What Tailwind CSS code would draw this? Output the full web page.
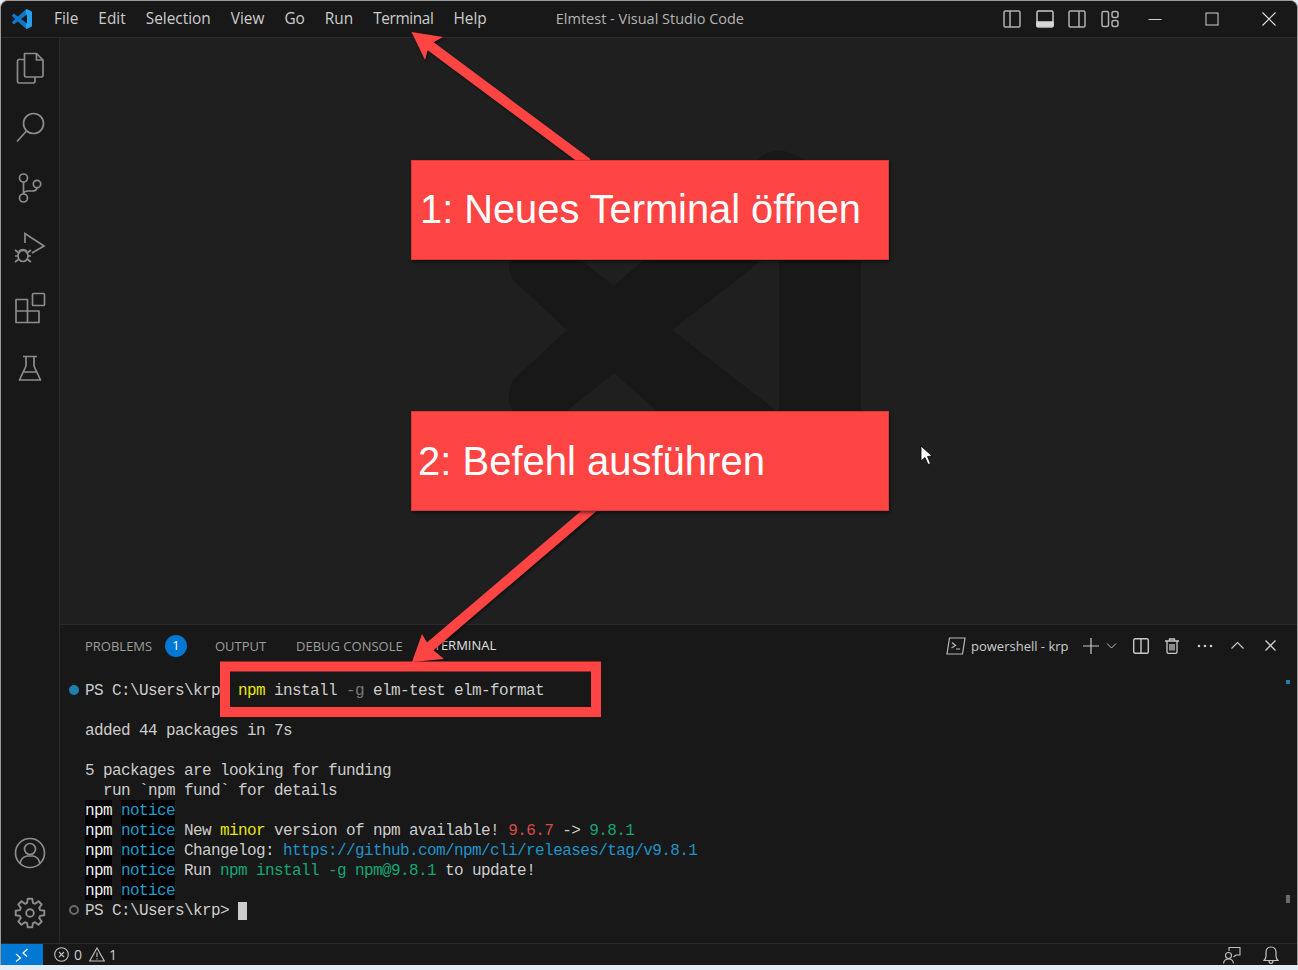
<!DOCTYPE html>
<html lang="en">
<head>
    <meta charset="utf-8"/>
    <meta content="width=device-width, initial-scale=1.0" name="viewport"/>
    <title>Elmtest - Visual Studio Code</title>
    <script src="https://cdn.jsdelivr.net/npm/@tailwindcss/browser@4"></script>
</head>
<body class="bg-[#e4edf6]">
<div class="relative w-[1298px] h-[970px] overflow-hidden">

    <!-- Window -->
    <div class="h-[965px] flex flex-col overflow-hidden rounded-t-lg border-x border-t border-[#9a9a9a] bg-[#1f1f1f] font-['Open_Sans',sans-serif] text-[#cccccc]">

        <!-- Title bar -->
        <div class="h-[37px] shrink-0 flex items-center bg-[#181818] border-b border-[#2b2b2b]">
            <svg class="ml-[11px] w-5 h-5" viewBox="0 0 24 24">
                <defs><linearGradient id="logo"><stop offset="0.72" stop-color="#0e78c8"/><stop offset="0.72" stop-color="#25a0ee"/></linearGradient></defs>
                <path fill="url(#logo)" d="M23.15 2.587L18.21.21a1.494 1.494 0 0 0-1.705.29l-9.46 8.63-4.12-3.128a.999.999 0 0 0-1.276.057L.327 7.261A1 1 0 0 0 .326 8.74L3.899 12 .326 15.26a1 1 0 0 0 .001 1.479L1.65 17.94a.999.999 0 0 0 1.276.057l4.12-3.128 9.46 8.63a1.492 1.492 0 0 0 1.704.29l4.942-2.377A1.5 1.5 0 0 0 24 20.06V3.939a1.5 1.5 0 0 0-.85-1.352zm-5.146 14.861L10.826 12l7.178-5.448v10.896z"/>
            </svg>
            <div class="ml-[22px] flex gap-5 text-[15.4px] leading-none">
                <span>File</span><span>Edit</span><span>Selection</span><span>View</span><span>Go</span><span>Run</span><span class="tracking-[-0.4px]">Terminal</span><span>Help</span>
            </div>
            <span class="ml-[69px] text-[14.5px] leading-none text-[#b4b4b4]">Elmtest - Visual Studio Code</span>
            <div class="ml-auto flex items-center">
                <span class="w-[32.5px] flex justify-center"><svg class="w-[18px] h-[18px]" viewBox="0 0 18 18" fill="none" stroke="#b0b0b0" stroke-width="1.5"><rect x="1" y="1" width="16" height="16" rx="1.5"/><path d="M7 1V17"/></svg></span>
                <span class="w-[32.5px] flex justify-center"><svg class="w-[18px] h-[18px]" viewBox="0 0 18 18" fill="none" stroke="#c8c8c8" stroke-width="1.5"><rect x="1" y="1" width="16" height="16" rx="1.5"/><path d="M1 12H17V16H1Z" fill="#d8d8d8" stroke="#d8d8d8"/></svg></span>
                <span class="w-[32.5px] flex justify-center"><svg class="w-[18px] h-[18px]" viewBox="0 0 18 18" fill="none" stroke="#b0b0b0" stroke-width="1.5"><rect x="1" y="1" width="16" height="16" rx="1.5"/><path d="M11 1V17"/></svg></span>
                <span class="w-[32.5px] flex justify-center"><svg class="w-[18px] h-[18px]" viewBox="0 0 18 18" fill="none" stroke="#b0b0b0" stroke-width="1.5"><rect x="1" y="1.5" width="6.5" height="15" rx="1.5"/><rect x="11" y="1.5" width="6" height="6" rx="2"/><rect x="11" y="10.5" width="6" height="6" rx="2"/></svg></span>
                <span class="w-[57px] flex justify-center"><svg class="w-[14px] h-[14px]" viewBox="0 0 14 14" fill="none" stroke="#d0d0d0"><path d="M0.5 7.5H13.5"/></svg></span>
                <span class="w-[57px] flex justify-center"><svg class="w-[14px] h-[14px]" viewBox="0 0 14 14" fill="none" stroke="#d0d0d0"><rect x="1" y="1" width="12" height="12"/></svg></span>
                <span class="w-[57px] flex justify-center"><svg class="w-[14px] h-[14px]" viewBox="0 0 14 14" fill="none" stroke="#e0e0e0" stroke-width="1.1"><path d="M0.5 0.5L13.5 13.5M13.5 0.5L0.5 13.5"/></svg></span>
            </div>
        </div>

        <div class="flex-1 flex min-h-0">
            <!-- Activity bar -->
            <div class="w-[59px] shrink-0 flex flex-col items-center bg-[#181818] border-r border-[#2b2b2b]">
                <div class="pt-[10px] flex flex-col gap-5">
                    <svg class="w-10 h-10" viewBox="10 48 40 40" fill="none" stroke="#8c8c8c" stroke-width="1.7" stroke-linejoin="round"><path d="M24.5 53.5H36.5L43 60V75.5Q43 77 41.5 77H26Q24.5 77 24.5 75.5Z"/><path d="M36.5 53.5V60H43"/><path d="M24.5 59.5H19Q17.5 59.5 17.5 61V81.5Q17.5 83 19 83H33.5Q35 83 35 81.5V77"/></svg>
                    <svg class="w-10 h-10" viewBox="10 108 40 40" fill="none" stroke="#8c8c8c" stroke-width="1.7"><circle cx="33.5" cy="123.5" r="10"/><path d="M26.5 131L17 141.5"/></svg>
                    <svg class="w-10 h-10" viewBox="10 168 40 40" fill="none" stroke="#8c8c8c" stroke-width="1.7"><circle cx="23.5" cy="178" r="4"/><circle cx="23.5" cy="198" r="4"/><circle cx="37" cy="184" r="3.7"/><path d="M23.5 182V194M37 188Q36.5 191 32 191H28Q24 191 23.5 194"/></svg>
                    <svg class="w-10 h-10" viewBox="10 228 40 40" fill="none" stroke="#8c8c8c" stroke-width="1.7"><path d="M25 243V233.5L44 246L32 253"/><ellipse cx="23" cy="256" rx="5" ry="5.5"/><path d="M19 251Q23 248 27 251M15 250L19 253M31 250L27 253M15 256H18M28 256H31M15 262L19 259M31 262L27 259"/></svg>
                    <svg class="w-10 h-10" viewBox="10 288 40 40" fill="none" stroke="#8c8c8c" stroke-width="1.7" stroke-linejoin="round"><path d="M16 299.5H27.5V322.5H16ZM16 311H39V322.5H27.5"/><rect x="32.5" y="293.5" width="12" height="12" rx="1"/></svg>
                    <svg class="w-10 h-10" viewBox="10 348 40 40" fill="none" stroke="#8c8c8c" stroke-width="1.7" stroke-linejoin="round"><path d="M23 356.5H37M26 356.5V366L19.5 380H40.5L34 366V356.5M23.5 372H36.5"/></svg>
                </div>
                <div class="mt-auto pb-[10px] flex flex-col gap-5">
                    <svg class="w-10 h-10" viewBox="10 833 40 40" fill="none" stroke="#8c8c8c" stroke-width="1.7"><circle cx="30" cy="853" r="14.5"/><circle cx="30" cy="849" r="5.5"/><path d="M20 864Q21 857 27 856H33Q39 857 40 864"/></svg>
                    <svg class="w-10 h-10" viewBox="-20 -20 40 40" fill="none" stroke="#8c8c8c" stroke-width="1.9" stroke-linejoin="round"><path d="M-2.9 -10.1L-2.3 -14.3H2.3L2.9 -10.1L5.09 -9.19L8.49 -11.74L11.74 -8.49L9.19 -5.09L10.1 -2.9L14.3 -2.3V2.3L10.1 2.9L9.19 5.09L11.74 8.49L8.49 11.74L5.09 9.19L2.9 10.1L2.3 14.3H-2.3L-2.9 10.1L-5.09 9.19L-8.49 11.74L-11.74 8.49L-9.19 5.09L-10.1 2.9L-14.3 2.3V-2.3L-10.1 -2.9L-9.19 -5.09L-11.74 -8.49L-8.49 -11.74L-5.09 -9.19Z"/><circle r="3.8"/></svg>
                </div>
            </div>

            <div class="flex-1 flex flex-col min-w-0">
                <!-- Editor with the faint logo -->
                <div class="relative flex-1 bg-[#1f1f1f]">
                    <svg class="absolute left-0 top-0" width="1238" height="586" viewBox="60 38 1238 586">
                        <path fill="#181818" fill-rule="evenodd" d="M861 185L790 153Q773 146 757 160L614 286L545 232Q535 226 527 233L512 250Q505 262 513 280L567 330L513 380Q505 398 512 410L527 427Q535 434 545 428L614 373L757 500Q773 514 790 507L861 475ZM779 247L672 330L779 413Z"/>
                    </svg>
                </div>

                <!-- Panel -->
                <div class="relative h-[319px] shrink-0 bg-[#181818] border-t border-[#2b2b2b]">
                    <div class="h-11 flex items-center pl-[25px] text-[13px] text-[#9d9d9d]">
                        <span class="w-[68px]">PROBLEMS</span>
                        <span class="ml-3 -mt-[3px] w-[22px] h-[22px] rounded-full bg-[#0078d4] text-white text-[13px] flex items-center justify-center">1</span>
                        <span class="ml-7 w-[51px]">OUTPUT</span>
                        <span class="ml-[30px] w-[107px] whitespace-nowrap">DEBUG CONSOLE</span>
                        <span class="ml-7 self-start h-10 w-[68px] pt-[2px] flex items-center justify-center border-b border-[#0078d4] text-[#e0e0e0]">TERMINAL</span>

                        <div class="ml-auto mr-[21px] mb-[3px] flex items-center text-[#cccccc]">
                            <svg class="w-5 h-5" viewBox="0 0 20 20" fill="none" stroke="#b8b8b8" stroke-width="1.2"><path d="M3.5 2H19L16.5 18H1Z"/><path d="M6 6.5L9.5 9.5L5.5 12M10 13H14"/></svg>
                            <span class="ml-[5px] mt-[2px] w-[99px] text-[13px] whitespace-nowrap">powershell - krp</span>
                            <svg class="ml-[13px] w-4 h-4" viewBox="0 0 16 16" fill="none" stroke="#c8c8c8" stroke-width="1.2"><path d="M0 8H16M8 0V16"/></svg>
                            <svg class="ml-[7px] w-[11px] h-[11px]" viewBox="0 0 11 11" fill="none" stroke="#c0c0c0"><path d="M1 3.5L5.5 8L10 3.5"/></svg>
                            <svg class="ml-4 w-4 h-4" viewBox="0 0 16 16" fill="none" stroke="#c8c8c8" stroke-width="1.4"><rect x="0.7" y="0.7" width="14.6" height="14.6" rx="1.5"/><path d="M8 1V15"/></svg>
                            <svg class="ml-4 w-[14px] h-4" viewBox="0 0 14 16" fill="none" stroke="#c8c8c8" stroke-width="1.3"><path d="M0 3H14M4.5 3V1H9.5V3M2 3V14Q2 15.3 3.3 15.3H10.7Q12 15.3 12 14V3M5 6V12.5M7 6V12.5M9 6V12.5"/></svg>
                            <svg class="ml-[18px] w-4 h-4" viewBox="0 0 16 16" fill="#c8c8c8"><circle cx="2" cy="8" r="1.3"/><circle cx="8" cy="8" r="1.3"/><circle cx="14" cy="8" r="1.3"/></svg>
                            <svg class="ml-[18px] w-[13px] h-[13px]" viewBox="0 0 13 13" fill="none" stroke="#c8c8c8" stroke-width="1.2"><path d="M0.5 9.5L6.5 3.5L12.5 9.5"/></svg>
                            <svg class="ml-[21px] w-[11px] h-[11px]" viewBox="0 0 11 11" fill="none" stroke="#d0d0d0" stroke-width="1.3"><path d="M0.5 0.5L10.5 10.5M10.5 0.5L0.5 10.5"/></svg>
                        </div>
                    </div>

                    <!-- Terminal output -->
                    <div class="pt-[11px] font-['Liberation_Mono',monospace] text-[16px] tracking-[-0.6px] leading-[22px] text-[#cccccc]">
                        <div class="h-5 flex items-center">
                            <span class="ml-[9px] mr-[6px] w-[10px] h-[10px] rounded-full bg-[#1f7fb0]"></span>
                            <span class="mt-[2px] whitespace-pre">PS C:\Users\krp&gt; <span class="text-[#e5e510]">npm</span> install <span class="text-[#7a7a7a]">-g</span> elm-test elm-format</span>
                        </div>
                        <div class="h-5"></div>
                        <div class="h-5 pl-[25px] whitespace-pre">added 44 packages in 7s</div>
                        <div class="h-5"></div>
                        <div class="h-5 pl-[25px] whitespace-pre">5 packages are looking for funding</div>
                        <div class="h-5 pl-[25px] whitespace-pre">  run `npm fund` for details</div>
                        <div class="h-5 pl-[25px] whitespace-pre"><span class="inline-block h-5 bg-black text-[#f0f0f0]">npm</span> <span class="inline-block h-5 bg-black text-[#1f9ecb]">notice</span></div>
                        <div class="h-5 pl-[25px] whitespace-pre"><span class="inline-block h-5 bg-black text-[#f0f0f0]">npm</span> <span class="inline-block h-5 bg-black text-[#1f9ecb]">notice</span> New <span class="text-[#e5e510]">minor</span> version of npm available! <span class="text-[#d94a4a]">9.6.7</span> -&gt; <span class="text-[#13a772]">9.8.1</span></div>
                        <div class="h-5 pl-[25px] whitespace-pre"><span class="inline-block h-5 bg-black text-[#f0f0f0]">npm</span> <span class="inline-block h-5 bg-black text-[#1f9ecb]">notice</span> Changelog: <span class="text-[#1f93c8]">https://github.com/npm/cli/releases/tag/v9.8.1</span></div>
                        <div class="h-5 pl-[25px] whitespace-pre"><span class="inline-block h-5 bg-black text-[#f0f0f0]">npm</span> <span class="inline-block h-5 bg-black text-[#1f9ecb]">notice</span> Run <span class="text-[#13a772]">npm install -g npm@9.8.1</span> to update!</div>
                        <div class="h-5 pl-[25px] whitespace-pre"><span class="inline-block h-5 bg-black text-[#f0f0f0]">npm</span> <span class="inline-block h-5 bg-black text-[#1f9ecb]">notice</span></div>
                        <div class="h-5 flex items-center">
                            <span class="ml-[9px] mr-[6px] w-[10px] h-[10px] rounded-full border-2 border-[#6a6a6a]"></span>
                            <span class="mt-[2px] whitespace-pre">PS C:\Users\krp&gt; </span><span class="mt-[2px] w-[9px] h-[18px] bg-[#cccccc]"></span>
                        </div>
                    </div>

                    <!-- Scrollbar markers -->
                    <span class="absolute right-[7px] top-[55px] w-1 h-1 bg-[#1f7fb0]"></span>
                    <span class="absolute right-[7px] top-[270px] w-1 h-2 bg-[#6a6a6a]"></span>
                </div>
            </div>
        </div>

        <!-- Status bar -->
        <div class="h-[22px] shrink-0 flex items-center bg-[#181818] border-t border-[#2b2b2b] text-[14px]">
            <span class="w-[42px] h-full flex items-center justify-center bg-[#0078d4]">
                <svg class="w-[14px] h-[14px]" viewBox="0 0 14 14" fill="none" stroke="#ffffff" stroke-width="1.2"><path d="M1 6L5.5 10L1 13.5M12.5 1L8 5L12 8.5"/></svg>
            </span>
            <svg class="ml-[11px] w-[15px] h-[15px]" viewBox="0 0 15 15" fill="none" stroke="#c0c0c0" stroke-width="1.1"><circle cx="7.5" cy="7.5" r="6.8"/><path d="M5 5L10 10M10 5L5 10"/></svg>
            <span class="ml-[5px] w-[8px] leading-none">0</span>
            <svg class="ml-[7px] w-4 h-[15px]" viewBox="0 0 16 15" fill="none" stroke="#c0c0c0" stroke-width="1.1"><path d="M8 1L15.3 14H0.7Z"/><path d="M8 5.5V10M8 11.2V12.6"/></svg>
            <span class="ml-[4px] leading-none">1</span>
            <div class="ml-auto mr-[18px] flex items-center gap-[22px]">
                <svg class="w-[18px] h-[18px]" viewBox="0 0 18 18" fill="none" stroke="#c0c0c0" stroke-width="1.1"><path d="M6 5V1.5H17V9H13L10.5 11"/><circle cx="5.5" cy="9.5" r="3"/><path d="M0.5 17.5Q1 13 5.5 13Q10 13 10.5 17.5"/></svg>
                <svg class="w-4 h-[18px]" viewBox="0 0 16 18" fill="none" stroke="#c0c0c0" stroke-width="1.2"><path d="M1 14.5H15Q13 12.5 13 10V6.5Q13 1 8 1Q3 1 3 6.5V10Q3 12.5 1 14.5ZM6 15Q6 17.3 8 17.3Q10 17.3 10 15"/></svg>
            </div>
        </div>
    </div>

    <!-- Arrows and the frame drawn over the screenshot -->
    <svg class="absolute left-0 top-0 drop-shadow-[1px_2px_1px_rgba(0,0,0,0.45)]" width="1298" height="970" viewBox="0 0 1298 970" fill="#ff4444">
        <path d="M411.5 32L443 37L433.7 42.3L590.5 159L584.5 167L427.7 50.3L425 60Z"/>
        <path d="M412 662L422 634L427 642.6L590.7 502.8L597.3 510.4L433.5 650.2L444 659Z"/>
    </svg>
    <svg class="absolute left-0 top-0" width="1298" height="970" viewBox="0 0 1298 970" fill="none">
        <rect x="225" y="666.5" width="371" height="45.5" stroke="#ff4444" stroke-width="10"/>
    </svg>

    <!-- Callouts -->
    <div class="absolute left-[411px] top-[160px] w-[478px] h-[100px] flex items-center pl-2 pb-px bg-[#ff4444] border border-[#d83a3a] shadow-[1px_2px_3px_rgba(0,0,0,0.5)] font-['Liberation_Sans',sans-serif] text-[39.8px] text-white">1: Neues Terminal öffnen</div>
    <div class="absolute left-[411px] top-[411px] w-[478px] h-[100px] flex items-center pl-[6px] pb-px bg-[#ff4444] border border-[#d83a3a] shadow-[1px_2px_3px_rgba(0,0,0,0.5)] font-['Liberation_Sans',sans-serif] text-[40px] text-white">2: Befehl ausführen</div>

    <!-- Mouse pointer -->
    <svg class="absolute left-[918px] top-[443px]" width="18" height="24" viewBox="918 443 18 24">
        <path d="M921 446V461L925 457.5L928 464.5L930.5 463.5L927.5 456.5L932 456Z" fill="#ffffff" stroke="#000000" stroke-width="0.8"/>
    </svg>
</div>
</body>
</html>
